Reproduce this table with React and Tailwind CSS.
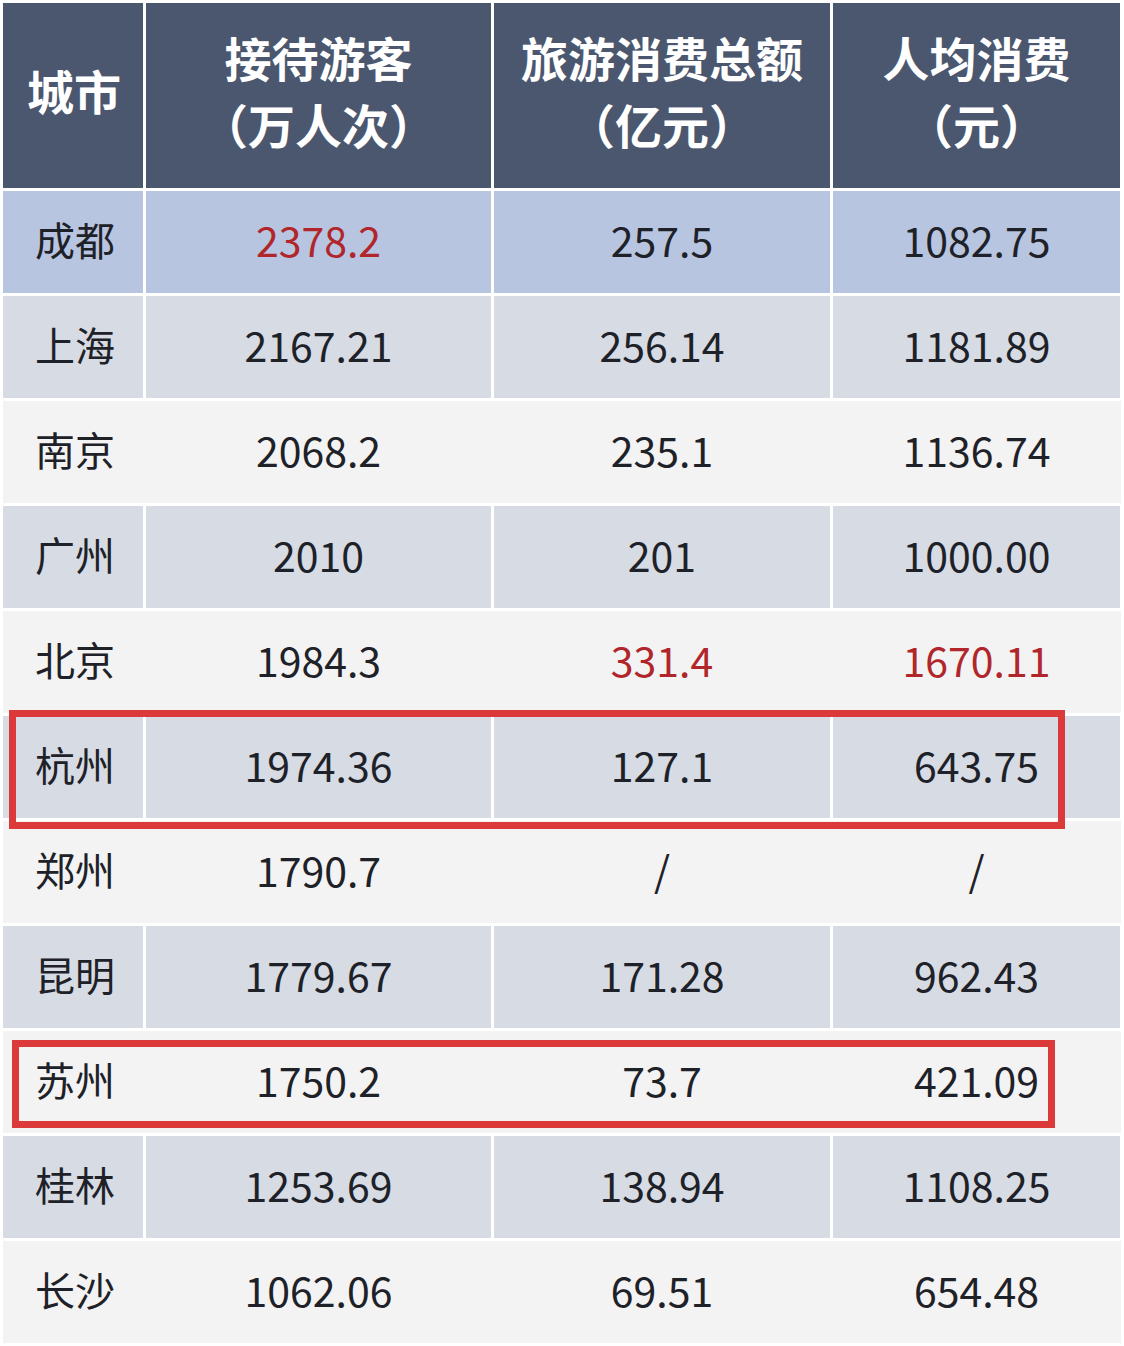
import React from "react";

const rows = [
  { city: "成都", a: "2378.2", b: "257.5", c: "1082.75", tone: "blue", red: [true, false, false] },
  { city: "上海", a: "2167.21", b: "256.14", c: "1181.89", tone: "gray" },
  { city: "南京", a: "2068.2", b: "235.1", c: "1136.74", tone: "light" },
  { city: "广州", a: "2010", b: "201", c: "1000.00", tone: "gray" },
  { city: "北京", a: "1984.3", b: "331.4", c: "1670.11", tone: "light", red: [false, true, true] },
  { city: "杭州", a: "1974.36", b: "127.1", c: "643.75", tone: "gray" },
  { city: "郑州", a: "1790.7", b: "/", c: "/", tone: "light" },
  { city: "昆明", a: "1779.67", b: "171.28", c: "962.43", tone: "gray" },
  { city: "苏州", a: "1750.2", b: "73.7", c: "421.09", tone: "light" },
  { city: "桂林", a: "1253.69", b: "138.94", c: "1108.25", tone: "gray" },
  { city: "长沙", a: "1062.06", b: "69.51", c: "654.48", tone: "light" },
];

const font = { fontFamily: '"Noto Sans CJK SC", "Noto Sans", sans-serif' };

function Row({ r }) {
  const red = r.red || [false, false, false];
  const rowBg = r.tone === "light" ? "bg-[#f3f3f3]" : "bg-white";
  const cellBg =
    r.tone === "blue" ? "bg-[#b8c5e1]" : r.tone === "gray" ? "bg-[#d6dbe4]" : "bg-[#f3f3f3]";
  const num = "flex items-center justify-center pb-[6px] text-[41px] leading-none";
  return (
    <div className={`grid grid-cols-[140px_345px_336px_287px] gap-x-[3px] h-[102px] ${rowBg}`}>
      <div className={`${cellBg} flex items-center pl-[32px] pb-[6px] text-[40px] leading-none text-[#1e2228]`}>
        {r.city}
      </div>
      <div className={`${cellBg} ${num} ${red[0] ? "text-[#b0262b]" : "text-[#1e2228]"}`}>{r.a}</div>
      <div className={`${cellBg} ${num} ${red[1] ? "text-[#b0262b]" : "text-[#1e2228]"}`}>{r.b}</div>
      <div className={`${cellBg} ${num} ${red[2] ? "text-[#b0262b]" : "text-[#1e2228]"}`}>{r.c}</div>
    </div>
  );
}

export default function App() {
  const head = "bg-[#4a576e] flex flex-col items-center justify-center pb-[12px] text-white font-bold text-[47px] leading-[67px]";
  return (
    <div className="relative w-[1124px] h-[1346px] bg-white pt-[3px] px-[3px] pb-[3px] overflow-hidden" style={font}>
      <div className="flex flex-col gap-y-[3px]">
        <div className="grid grid-cols-[140px_345px_336px_287px] gap-x-[3px] h-[185px]">
          <div className={head}>
            <span className="pl-[2px]">城市</span>
          </div>
          <div className={head}>
            <span>接待游客</span>
            <span>（万人次）</span>
          </div>
          <div className={head}>
            <span>旅游消费总额</span>
            <span>（亿元）</span>
          </div>
          <div className={head}>
            <span>人均消费</span>
            <span>（元）</span>
          </div>
        </div>
        {rows.map((r) => (
          <Row key={r.city} r={r} />
        ))}
      </div>
      <div className="absolute left-[9px] top-[710px] w-[1056px] h-[119px] border-[7px] border-[#dc3a3a] pointer-events-none" />
      <div className="absolute left-[12px] top-[1040px] w-[1043px] h-[88px] border-[7px] border-[#dc3a3a] pointer-events-none" />
    </div>
  );
}
